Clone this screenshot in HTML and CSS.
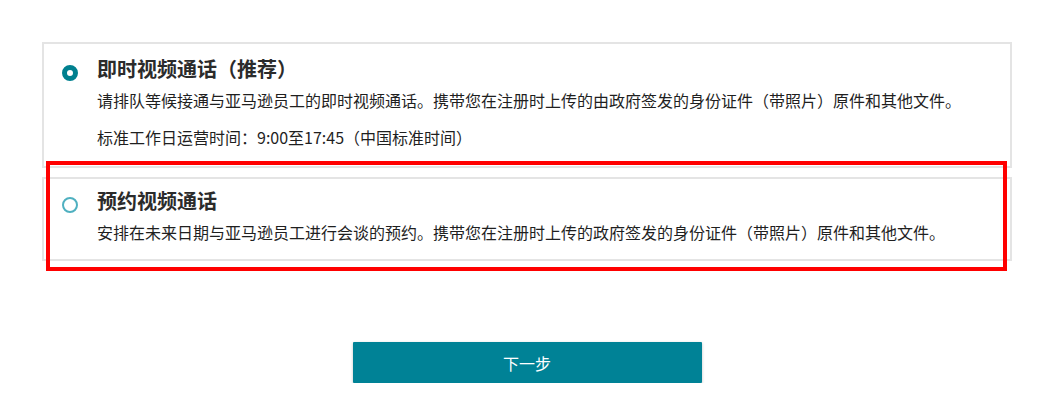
FILE: index.html
```html
<!DOCTYPE html>
<html lang="zh-CN">
<head>
<meta charset="utf-8">
<title>视频通话</title>
<link rel="stylesheet" href="styles.css">
</head>
<body>
<div class="page">
  <div class="options">
    <label class="option option-first">
      <span class="radio radio-checked"></span>
      <span class="option-text">
        <span class="option-title">即时视频通话（推荐）</span>
        <span class="option-desc">请排队等候接通与亚马逊员工的即时视频通话。携带您在注册时上传的由政府签发的身份证件（带照片）原件和其他文件。</span>
        <span class="option-note">标准工作日运营时间：9:00至17:45（中国标准时间）</span>
      </span>
    </label>
    <label class="option option-second">
      <span class="radio"></span>
      <span class="option-text">
        <span class="option-title">预约视频通话</span>
        <span class="option-desc">安排在未来日期与亚马逊员工进行会谈的预约。携带您在注册时上传的政府签发的身份证件（带照片）原件和其他文件。</span>
      </span>
    </label>
    <div class="highlight"></div>
  </div>
  <div class="actions">
    <button class="next-btn" type="button">下一步</button>
  </div>
</div>
</body>
</html>
```
FILE: styles.css
```css
html, body {
  margin: 0;
  padding: 0;
  background: #ffffff;
}

body {
  font-family: "Noto Sans CJK SC", "Noto Sans", sans-serif;
  color: #222222;
}

.page {
  width: 970px;
  padding: 42px 0 0 42px;
}

.options {
  position: relative;
  display: flex;
  flex-direction: column;
  gap: 9px;
}

.option {
  display: flex;
  align-items: flex-start;
  border: 2px solid #e4e4e4;
  padding: 13px 20px 17px 18px;
}

.option-second {
  padding-top: 10px;
  padding-bottom: 15px;
}

.radio {
  flex: none;
  box-sizing: border-box;
  width: 16px;
  height: 16px;
  margin-top: 8px;
  margin-right: 19px;
  border-radius: 50%;
  border: 2px solid #4fb0c0;
  background: #ffffff;
}

.radio-checked {
  border: 5px solid #00808f;
  background: #ffffff;
}

.option-text {
  display: flex;
  flex-direction: column;
}

.option-title {
  font-size: 20px;
  font-weight: 700;
  line-height: 24px;
  color: #2b2b2b;
  margin-bottom: 7px;
}

.option-desc,
.option-note {
  font-size: 16px;
  line-height: 24px;
  color: #1f1f1f;
}

.option-note {
  margin-top: 13px;
}

.highlight {
  position: absolute;
  left: 4px;
  top: 119px;
  width: 961px;
  height: 110px;
  box-sizing: border-box;
  border: 4px solid #ff0000;
  pointer-events: none;
}

.actions {
  display: flex;
  justify-content: center;
  margin-top: 81px;
}

.next-btn {
  width: 349px;
  height: 41px;
  border: none;
  border-radius: 1px;
  background: #008296;
  color: #ffffff;
  font-family: "Noto Sans CJK SC", "Noto Sans", sans-serif;
  font-size: 16px;
  box-shadow: 0 1px 3px rgba(0, 0, 0, 0.25);
  cursor: pointer;
}
```
